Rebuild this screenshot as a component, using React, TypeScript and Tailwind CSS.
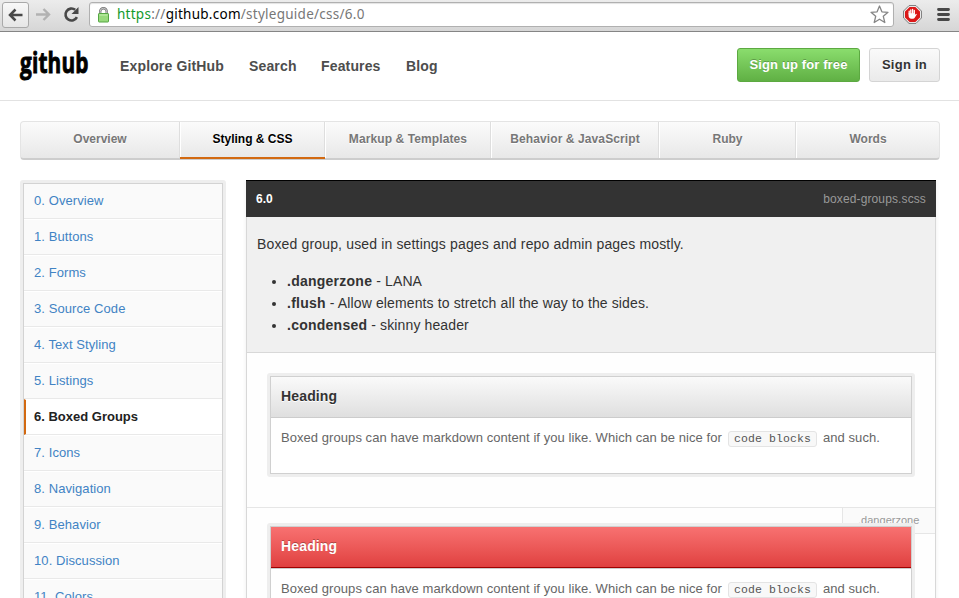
import type { ReactNode } from 'react';

const tabs = [
  { label: 'Overview', cls: 'w-[159px]' },
  { label: 'Styling & CSS', cls: 'w-[145px]', active: true },
  { label: 'Markup & Templates', cls: 'w-[166px] tracking-[0.1px]' },
  { label: 'Behavior & JavaScript', cls: 'w-[168px] tracking-[0.1px]' },
  { label: 'Ruby', cls: 'w-[137px]' },
  { label: 'Words', cls: 'w-[143px]' },
];

const sections = [
  'Overview', 'Buttons', 'Forms', 'Source Code', 'Text Styling', 'Listings',
  'Boxed Groups', 'Icons', 'Navigation', 'Behavior', 'Discussion', 'Colors',
];

function BrowserBar() {
  return (
    <div className="flex h-8 shrink-0 items-start border-b border-[#858585] bg-gradient-to-b from-[#ececec] to-[#d6d6d6] pt-[2px]">
      <div className="ml-[2px] flex h-[26px] w-[27px] items-center justify-center rounded-[3px] border border-[#a9a9a9] bg-gradient-to-b from-[#f8f8f8] to-[#e6e6e6]">
        <svg width="17" height="15" viewBox="0 0 17 15" fill="none" stroke="#484848" strokeWidth="2.5">
          <path d="M15.5 7H3M8.5 1.5L3 7L8.5 12.5" />
        </svg>
      </div>
      <svg className="ml-[6px] mt-[5px]" width="17" height="15" viewBox="0 0 17 15" fill="none" stroke="#b2b2b2" strokeWidth="2.4">
        <path d="M1 7.5H14M8.5 2L14 7.5L8.5 13" />
      </svg>
      <svg className="ml-[11px] mt-[4px]" width="18" height="17" viewBox="0 0 18 17">
        <path d="M13.9 11.2A6 6 0 1 1 12.2 3.8" fill="none" stroke="#484848" strokeWidth="2.6" />
        <path d="M15.5 1v7h-7z" fill="#484848" />
      </svg>
      <div className="ml-[8px] flex h-[25px] w-[805px] items-center rounded-[3px] border border-[#b0b0b0] bg-white shadow-[inset_0_1px_1px_#e3e3e3]">
        <svg className="ml-[7px]" width="13" height="16" viewBox="0 0 13 16">
          <path d="M3.2 8V4.5a3.2 3.2 0 0 1 6.5 0V8" fill="none" stroke="#777" strokeWidth="2.4" />
          <path d="M3.2 8V4.5a3.2 3.2 0 0 1 6.5 0V8" fill="none" stroke="#ddd" strokeWidth=".8" />
          <rect x="1.5" y="6.5" width="10" height="8.5" rx=".6" fill="#98da7c" stroke="#55a643" />
          <path d="M2.5 8h8" stroke="#c4f0af" />
        </svg>
        <span className="ml-[7px] mt-[-2px] w-[260px] whitespace-nowrap font-['Noto_Sans',sans-serif] text-[13.5px] leading-[22px] tracking-[0.26px] text-[#777]">
          <span className="text-[#139a2c]">https</span>://<span className="text-black">github.com</span>/styleguide/css/6.0
        </span>
        <svg className="ml-auto mr-[4px]" width="19" height="19" viewBox="0 0 19 19" fill="#fff" stroke="#858585" strokeWidth="1.3" strokeLinejoin="round">
          <path d="M9.5 1L11.900 6.800L18 7.300L13.300 11.300L14.800 17.500L9.500 14.200L4.200 17.500L5.700 11.300L1 7.300L7.100 6.800Z" />
        </svg>
      </div>
      <svg className="ml-[9px] mt-[3px]" width="19" height="19" viewBox="0 0 19 19">
        <path d="M6 .6h7L18.4 6v7L13 18.4H6L.6 13V6z" fill="#f4f4f4" stroke="#777" />
        <path d="M6.600 2h5.800L17 6.600v5.800L12.400 17H6.600L2 12.400V6.600z" fill="#db1818" />
        <path d="M6.200 9V6.200M7.800 9V4.900M9.600 9V4.500M11.300 9V5.500" stroke="#fff" strokeWidth="1.3" strokeLinecap="round" />
        <path d="M5.600 8.300h6.300v1.600l1.100-1.200.9.600-2.200 3.400c-.6.800-1.100 1-2.100 1H8.300c-1.700 0-2.700-1.100-2.700-2.600z" fill="#fff" />
      </svg>
      <svg className="ml-[15px] mt-[5px]" width="13" height="15" viewBox="0 0 13 15" stroke="#484848" strokeWidth="2.8" strokeLinecap="round">
        <path d="M1.5 2.5h10M1.5 7.5h10M1.5 12.5h10" />
      </svg>
    </div>
  );
}

function Header() {
  return (
    <header className="flex h-[69px] shrink-0 items-center border-b border-[#e2e2e2] bg-white text-[14px] font-bold text-[#4d4d4d]">
      <div className="ml-[20px] h-[46px] w-[100px]">
        <span className="inline-block origin-left scale-x-[0.73] font-['Open_Sans',sans-serif] text-[28.5px] font-bold leading-[38px] tracking-[0.2px] text-black [-webkit-text-stroke:0.9px_black]">github</span>
      </div>
      <nav className="flex whitespace-nowrap tracking-[0.15px]">
        <a className="w-[129px]">Explore GitHub</a>
        <a className="w-[72px]">Search</a>
        <a className="w-[85px]">Features</a>
        <a>Blog</a>
      </nav>
      <a className="ml-auto mt-[-3px] flex h-[34px] w-[123px] items-center justify-center rounded-[3px] border border-[#5ca941] bg-gradient-to-b from-[#8add6d] to-[#60b044] text-[13px] tracking-[0.12px] text-white [text-shadow:0_-1px_0_rgba(0,0,0,0.25)]">Sign up for free</a>
      <a className="ml-[9px] mr-[19px] mt-[-3px] flex h-[34px] w-[71px] items-center justify-center rounded-[3px] border border-[#d4d4d4] bg-gradient-to-b from-[#fafafa] to-[#eaeaea] text-[13px] tracking-[0.25px] text-[#333] [text-shadow:0_1px_0_rgba(255,255,255,0.9)]">Sign in</a>
    </header>
  );
}

function TabBar() {
  return (
    <div className="ml-[20px] mr-[19px] mt-[20px] flex h-[39px] shrink-0 overflow-hidden rounded-[4px] border border-b-2 border-[#e4e4e4] border-b-[#cdcdcd] bg-gradient-to-b from-[#fbfbfb] to-[#e8e8e8] text-[12px] font-bold text-[#777] [text-shadow:0_1px_0_#fff]">
      {tabs.map((t, i) => (
        <a
          key={t.label}
          className={`${t.cls} flex h-[38px] items-center justify-center whitespace-nowrap pb-[4px] ${i ? 'border-l border-l-white' : ''} ${i < 5 ? 'border-r border-r-[#dedede]' : ''} ${t.active ? 'text-black' : ''}`}
        >
          {t.label}
        </a>
      ))}
    </div>
  );
}

function Sidebar() {
  return (
    <aside className="h-[460px] w-[206px] shrink-0 rounded-[3px] bg-[#eee] p-[3px]">
      <ul className="h-full border border-[#d3d3d3] bg-[#fafafa] text-[13px] text-[#4183c4]">
        {sections.map((s, i) => (
          <li
            key={s}
            className={`flex items-center border-b border-b-[#e9e9e9] ${i === 0 ? 'h-[35px] pb-px' : 'h-[36px] border-t border-t-white'} ${i === 6 ? 'border-l-2 border-l-[#d26911] bg-white pl-[8px] font-bold text-[#222]' : 'pl-[10px] tracking-[0.08px]'}`}
          >
            <span className="whitespace-pre">{i}. {s}</span>
          </li>
        ))}
      </ul>
    </aside>
  );
}

function Group({ danger, children }: { danger?: boolean; children: ReactNode }) {
  return (
    <div className="relative ml-[20px] h-[104px] w-[648px] rounded-[3px] bg-[#eee] p-[3px]">
      <div className="h-[98px] border border-[#d0d0d0] bg-white">
        <h3
          className={danger
            ? 'h-[42px] border-b border-[#ccc] bg-gradient-to-b from-[#f87171] to-[#df3e3e] pl-[10px] text-[14px] font-bold leading-[39px] tracking-[0.15px] text-white shadow-[inset_0_-1px_0_#a00000] [text-shadow:0_-1px_0_rgba(0,0,0,0.3)]'
            : 'h-[41px] border-b border-[#ccc] bg-gradient-to-b from-[#fafafa] to-[#dfdfdf] pl-[10px] text-[14px] font-bold leading-[39px] tracking-[0.15px] text-[#333] [text-shadow:0_1px_0_#fff]'}
        >
          Heading
        </h3>
        <p className="flex items-center whitespace-nowrap pl-[10px] pt-[10px] text-[13px] leading-[20px] text-[#666]">{children}</p>
      </div>
    </div>
  );
}

function GroupText() {
  return (
    <>
      <span className="w-[447px] tracking-[0.06px]">Boxed groups can have markdown content if you like. Which can be nice for</span>
      <code className="mt-px flex h-[16px] w-[89px] items-center justify-center rounded-[3px] border border-[#e4e4e4] bg-[#f8f8f8] pt-px font-['Liberation_Mono',monospace] text-[11.5px] leading-[14px] tracking-[0.1px] text-[#555]">code blocks</code>
      <span className="ml-[6px] tracking-[0.06px]">and such.</span>
    </>
  );
}

function Content() {
  return (
    <main className="ml-[20px] w-[690px] shrink-0 bg-[#fefefe] shadow-[0_0_4px_#eee]">
      <div className="flex h-[37px] items-center justify-between border-t border-black bg-[#333] px-[10px] text-[12px]">
        <b className="text-white">6.0</b>
        <span className="tracking-[0.12px] text-[#999]">boxed-groups.scss</span>
      </div>
      <div className="border-x border-[#d8d8d8]">
        <div className="h-[136px] border-b border-[#d8d8d8] bg-[#f0f0f0] pl-[10px] pt-[16px] text-[14px] leading-[22px] text-[#333]">
          <p className="tracking-[0.155px]">Boxed group, used in settings pages and repo admin pages mostly.</p>
          <ul className="mt-[15px] list-disc pl-[30px] tracking-[0.12px]">
            <li><b className="tracking-[0.25px]">.dangerzone</b> - LANA</li>
            <li><b className="tracking-[0.25px]">.flush</b> - Allow elements to stretch all the way to the sides.</li>
            <li><b className="tracking-[0.25px]">.condensed</b> - skinny header</li>
          </ul>
        </div>
        <div className="h-[154px] pt-[20px]">
          <Group><GroupText /></Group>
        </div>
        <div className="relative h-[120px] border-t border-[#e6e6e6] pt-[15px]">
          <span className="absolute right-0 top-0 h-[26px] w-[93px] border-b border-l border-[#e6e6e6] bg-[#fafafa] pl-[15px] text-[11px] leading-[25px] tracking-[0.02px] text-[#999]">.dangerzone</span>
          <Group danger><GroupText /></Group>
        </div>
      </div>
    </main>
  );
}

export default function App() {
  return (
    <div className="flex h-[598px] w-[959px] flex-col overflow-hidden bg-white font-['Liberation_Sans',Arial,sans-serif]">
      <BrowserBar />
      <Header />
      <TabBar />
      <div className="z-[1] ml-[180px] mt-[-3px] h-[2px] w-[145px] shrink-0 bg-[#d26911]" />
      <div className="mt-[21px] flex min-h-0 flex-1 items-start overflow-hidden pl-[20px]">
        <Sidebar />
        <Content />
      </div>
    </div>
  );
}
